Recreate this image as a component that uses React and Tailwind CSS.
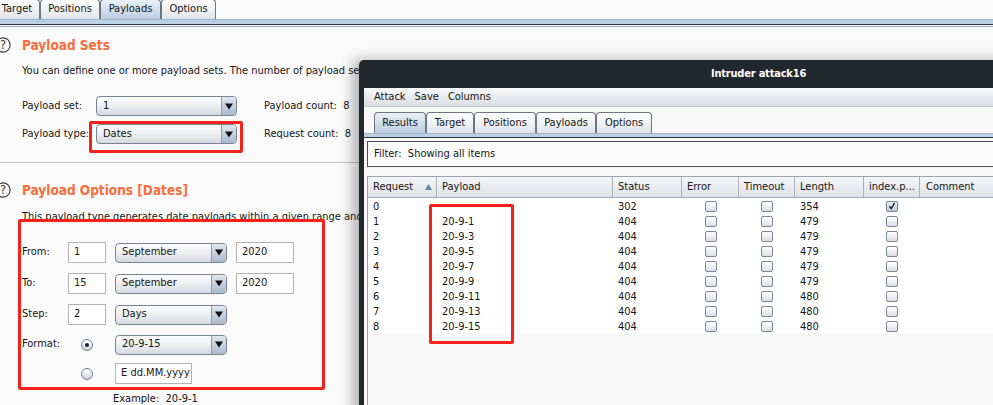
import React from "react";

const rows = [
  { req: "0", payload: "", status: "302", length: "354", hit: true },
  { req: "1", payload: "20-9-1", status: "404", length: "479" },
  { req: "2", payload: "20-9-3", status: "404", length: "479" },
  { req: "3", payload: "20-9-5", status: "404", length: "479" },
  { req: "4", payload: "20-9-7", status: "404", length: "479" },
  { req: "5", payload: "20-9-9", status: "404", length: "479" },
  { req: "6", payload: "20-9-11", status: "404", length: "480" },
  { req: "7", payload: "20-9-13", status: "404", length: "480" },
  { req: "8", payload: "20-9-15", status: "404", length: "480" },
];

function Arrow() {
  return (
    <svg width="8" height="7" viewBox="0 0 8 7">
      <path d="M0 0.5h8L4 6.5z" fill="#111" />
    </svg>
  );
}

function Combo({ className, children }) {
  return (
    <div className={"flex h-[20px] overflow-hidden rounded-[4px] border border-[#7a8394] bg-gradient-to-b from-[#fdfdfe] via-[#eceef1] to-[#d5d9e0] " + className}>
      <div className="flex flex-1 items-center pl-[6px]">{children}</div>
      <div className="flex w-[15px] items-center justify-center border-l border-[#8d9bad] bg-gradient-to-b from-[#dfe7ef] to-[#a9bbce]">
        <Arrow />
      </div>
    </div>
  );
}

function Field({ className, children }) {
  return (
    <div className={"flex h-[21px] items-center border border-[#b3b3b3] bg-white pl-[5px] " + className}>
      {children}
    </div>
  );
}

function Radio({ on }) {
  return (
    <div className="flex h-[12px] w-[12px] items-center justify-center rounded-full border border-[#6f7889] bg-gradient-to-b from-white to-[#cfd4dc]">
      {on && <div className="h-[4px] w-[4px] rounded-full bg-[#1d2430]" />}
    </div>
  );
}

function Check({ on }) {
  return (
    <div
      className={
        "flex h-[11px] w-[12px] items-center justify-center rounded-[2px] border border-[#7d8696] bg-gradient-to-b " +
        (on ? "from-[#e4ecf4] to-[#b7c9dc]" : "from-white to-[#dcdfe5]")
      }
    >
      {on && (
        <svg width="8" height="8" viewBox="0 0 8 8">
          <path d="M1.5 4.2L3.3 6.5L6.6 0.8" fill="none" stroke="#1b2230" strokeWidth="1.4" />
        </svg>
      )}
    </div>
  );
}

function Help() {
  return (
    <svg width="16" height="16" viewBox="0 0 16 16" className="shrink-0">
      <circle cx="8" cy="8" r="7.1" fill="none" stroke="#3a3a3a" strokeWidth="1.1" />
      <text x="8" y="12.2" textAnchor="middle" fontSize="11.5" fill="#3a3a3a" fontFamily="DejaVu Sans, sans-serif">?</text>
    </svg>
  );
}

function Tab({ className, selected, children }) {
  return (
    <div
      className={
        "flex items-center justify-center rounded-t-[4px] border border-b-0 border-[#6f7581] bg-gradient-to-b " +
        (selected ? "from-[#eaf1f7] to-[#b9cde0] " : "from-white to-[#e1e4e8] ") +
        className
      }
    >
      {children}
    </div>
  );
}

export default function App() {
  return (
    <div className="relative h-[405px] w-[993px] overflow-hidden bg-[#fafafa] font-['DejaVu_Sans_Condensed','DejaVu_Sans',sans-serif] text-[11px] text-[#161616]">
      {/* top tabs */}
      <div className="flex h-[19px] items-end">
        <Tab className="-ml-[6px] h-[20px] w-[46px]">Target</Tab>
        <Tab className="h-[20px] w-[60px]">Positions</Tab>
        <Tab className="h-[20px] w-[61px]" selected>Payloads</Tab>
        <Tab className="h-[20px] w-[55px]">Options</Tab>
      </div>
      <div className="h-[5px] border-t border-[#9fb5cb] bg-[#bdd1e4]" />
      <div className="h-px bg-[#2b2f3a]" />
      <div className="h-px bg-white" />
      <div className="h-px bg-[#a4a8b0]" />

      {/* payload sets */}
      <div className="mt-[9px] flex h-[18px] items-center">
        <div className="-ml-[5px]">
          <Help />
        </div>
        <span className="ml-[11px] text-[13.5px] font-bold text-[#f86d3b]">Payload Sets</span>
      </div>
      <div className="ml-[22px] mt-[10px] flex h-[14px] items-center whitespace-nowrap">
        You can define one or more payload sets. The number of payload sets
      </div>
      <div className="mt-[18px] flex h-[20px] items-center pl-[22px]">
        <span className="w-[74px]">Payload set:</span>
        <Combo className="w-[141px]">1</Combo>
        <span className="ml-[27px]">Payload count:&nbsp; 8</span>
      </div>
      <div className="mt-[8px] flex h-[20px] items-center pl-[22px]">
        <span className="w-[74px]">Payload type:</span>
        <Combo className="w-[141px]">Dates</Combo>
        <span className="ml-[27px]">Request count:&nbsp; 8</span>
      </div>

      <div className="mt-[18px] h-px bg-[#c4c4c4]" />

      {/* payload options */}
      <div className="mt-[18px] flex h-[18px] items-center">
        <div className="-ml-[5px]">
          <Help />
        </div>
        <span className="ml-[11px] text-[13.5px] font-bold text-[#f86d3b]">Payload Options [Dates]</span>
      </div>
      <div className="ml-[22px] mt-[11px] flex h-[14px] items-center whitespace-nowrap">
        This payload type generates date payloads within a given range and
      </div>

      <div className="mt-[18px] flex h-[21px] items-center pl-[22px]">
        <span className="w-[46px]">From:</span>
        <Field className="w-[38px]">1</Field>
        <Combo className="ml-[9px] w-[112px]">September</Combo>
        <Field className="ml-[9px] w-[58px]">2020</Field>
      </div>
      <div className="mt-[10px] flex h-[21px] items-center pl-[22px]">
        <span className="w-[46px]">To:</span>
        <Field className="w-[38px]">15</Field>
        <Combo className="ml-[9px] w-[112px]">September</Combo>
        <Field className="ml-[9px] w-[58px]">2020</Field>
      </div>
      <div className="mt-[10px] flex h-[21px] items-center pl-[22px]">
        <span className="w-[46px]">Step:</span>
        <Field className="w-[38px]">2</Field>
        <Combo className="ml-[9px] w-[112px]">Days</Combo>
      </div>
      <div className="mt-[9px] flex h-[21px] items-center pl-[22px]">
        <span className="w-[46px]">Format:</span>
        <div className="flex w-[38px] justify-center">
          <Radio on />
        </div>
        <Combo className="ml-[9px] w-[112px]">20-9-15</Combo>
      </div>
      <div className="mt-[8px] flex h-[21px] items-center pl-[22px]">
        <span className="w-[46px]" />
        <div className="flex w-[38px] justify-center">
          <Radio />
        </div>
        <Field className="ml-[9px] w-[77px]">E dd.MM.yyyy</Field>
      </div>
      <div className="mt-[8px] flex h-[14px] items-center pl-[113px]">Example:&nbsp; 20-9-1</div>

      {/* annotations on the left panel */}
      <div className="absolute left-[89px] top-[121px] h-[32px] w-[154px] rounded-[2px] border-[3px] border-[#f5221b]" />
      <div className="absolute left-[18px] top-[219px] h-[171px] w-[307px] rounded-[2px] border-[3px] border-[#f5221b]" />

      {/* attack window */}
      <div className="absolute left-[359px] top-[60px] flex h-[360px] w-[794px] flex-col overflow-hidden rounded-t-[5px] bg-[#22262d] pl-[5px] shadow-[-6px_0_14px_rgba(0,0,0,0.3)]">
        <div className="flex h-[28px] shrink-0 items-center justify-center text-[11px] font-bold tracking-[-0.2px] text-white">
          Intruder attack16
        </div>
        <div className="flex flex-1 flex-col bg-[#f8f8f8]">
          <div className="flex h-[19px] items-center gap-[9px] border-b border-[#c3c7cd] bg-gradient-to-b from-[#f8f9fa] to-[#dadde2] pl-[10px] pt-[1px]">
            <span>Attack</span>
            <span>Save</span>
            <span>Columns</span>
          </div>
          <div className="mt-[5px] flex h-[21px] items-end pl-[10px]">
            <Tab className="h-[21px] w-[52px] pt-[1px]" selected>Results</Tab>
            <Tab className="h-[21px] w-[48px] pt-[1px]">Target</Tab>
            <Tab className="h-[21px] w-[62px] pt-[1px]">Positions</Tab>
            <Tab className="h-[21px] w-[60px] pt-[1px]">Payloads</Tab>
            <Tab className="h-[21px] w-[56px] pt-[1px]">Options</Tab>
          </div>
          <div className="h-[4px] border-t border-[#9fb5cb] bg-[#bdd1e4]" />
          <div className="h-px bg-[#2b2f3a]" />

          <div className="ml-[3px] mt-[3px] flex h-[26px] items-center border border-[#4a4d53] bg-[#fcfcfc] pl-[6px]">
            Filter:&nbsp; Showing all items
          </div>

          <div className="ml-[3px] mt-[9px] flex flex-1 flex-col border-l border-t border-[#9ca2ac] bg-[#f8f8f8]">
            <div className="flex h-[21px] border-b border-[#a3a9b3] bg-gradient-to-b from-[#f5f6f8] to-[#dde1e6]">
              <div className="flex w-[69px] items-center justify-between border-r border-[#a9afb8] pl-[5px] pr-[4px]">
                <span>Request</span>
                <svg width="7" height="6" viewBox="0 0 7 6">
                  <path d="M0 6L3.5 0L7 6z" fill="#5b89b8" />
                </svg>
              </div>
              <div className="flex w-[176px] items-center border-r border-[#a9afb8] pl-[5px]">Payload</div>
              <div className="flex w-[69px] items-center border-r border-[#a9afb8] pl-[5px]">Status</div>
              <div className="flex w-[57px] items-center border-r border-[#a9afb8] pl-[5px]">Error</div>
              <div className="flex w-[56px] items-center border-r border-[#a9afb8] pl-[5px]">Timeout</div>
              <div className="flex w-[69px] items-center border-r border-[#a9afb8] pl-[5px]">Length</div>
              <div className="flex w-[56px] items-center border-r border-[#a9afb8] pl-[5px]">index.p...</div>
              <div className="flex flex-1 items-center pl-[6px]">Comment</div>
            </div>
            {rows.map((r) => (
              <div key={r.req} className="flex h-[15px] items-center bg-white pt-[1px] leading-[13px]">
                <div className="w-[69px] pl-[5px]">{r.req}</div>
                <div className="w-[176px] pl-[5px]">{r.payload}</div>
                <div className="w-[69px] pl-[5px]">{r.status}</div>
                <div className="flex w-[57px] justify-center">
                  <Check />
                </div>
                <div className="flex w-[56px] justify-center">
                  <Check />
                </div>
                <div className="w-[69px] pl-[5px]">{r.length}</div>
                <div className="flex w-[56px] justify-center">
                  <Check on={r.hit} />
                </div>
                <div className="flex-1" />
              </div>
            ))}
          </div>
        </div>
      </div>

      <div className="absolute left-[429px] top-[204px] h-[140px] w-[85px] rounded-[2px] border-[3px] border-[#f5221b]" />
    </div>
  );
}
